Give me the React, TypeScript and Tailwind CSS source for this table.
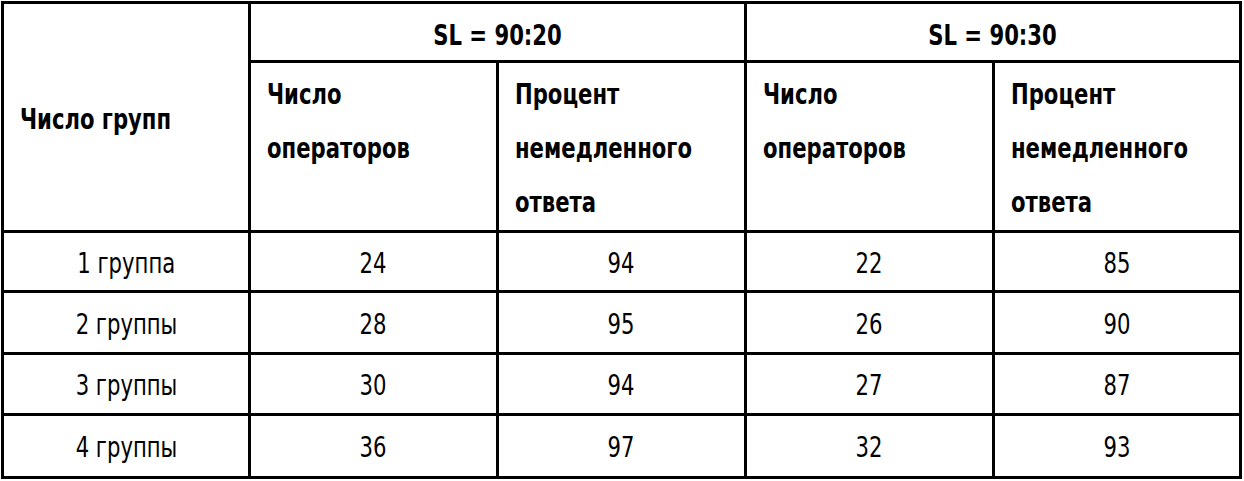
import React from "react";

const font = { fontFamily: '"Liberation Sans Narrow", "Arial Narrow", "DejaVu Sans Condensed", "Liberation Sans", sans-serif' };

const rows = [
  ["1 группа", "24", "94", "22", "85"],
  ["2 группы", "28", "95", "26", "90"],
  ["3 группы", "30", "94", "27", "87"],
  ["4 группы", "36", "97", "32", "93"],
];

const rowH = ["h-[57px]", "h-[59px]", "h-[58px]", "h-[60px]"];

function L({ children }: { children: React.ReactNode }) {
  return <span className="inline-block whitespace-nowrap scale-x-[0.84] origin-left">{children}</span>;
}
function C({ children }: { children: React.ReactNode }) {
  return <span className="inline-block whitespace-nowrap scale-x-[0.84] origin-center">{children}</span>;
}

export default function App() {
  return (
    <div className="w-[1244px] h-[481px] bg-white pl-px pt-px" style={font}>
      <div className="grid w-[1241px] grid-cols-[244px_245px_245px_245px_244px] gap-[3px] bg-black p-[3px] text-black">
        <div className="row-span-2 bg-white flex items-center pl-4 pt-[5px] text-[28px] font-bold leading-[54px]">
          <L>Число групп</L>
        </div>
        <div className="col-span-2 h-[56px] bg-white flex items-center justify-center text-[28px] font-bold pt-[8px]">
          <C>SL = 90:20</C>
        </div>
        <div className="col-span-2 h-[56px] bg-white flex items-center justify-center text-[28px] font-bold pt-[8px]">
          <C>SL = 90:30</C>
        </div>
        <div className="h-[167px] bg-white pl-4 pt-[5px] text-[28px] font-bold leading-[54px]">
          <L>Число</L><br /><L>операторов</L>
        </div>
        <div className="h-[167px] bg-white pl-4 pt-[5px] text-[28px] font-bold leading-[54px]">
          <L>Процент</L><br /><L>немедленного</L><br /><L>ответа</L>
        </div>
        <div className="h-[167px] bg-white pl-4 pt-[5px] text-[28px] font-bold leading-[54px]">
          <L>Число</L><br /><L>операторов</L>
        </div>
        <div className="h-[167px] bg-white pl-4 pt-[5px] text-[28px] font-bold leading-[54px]">
          <L>Процент</L><br /><L>немедленного</L><br /><L>ответа</L>
        </div>
        {rows.map((r, i) =>
          r.map((c, j) => (
            <div
              key={`${i}-${j}`}
              className={`${rowH[i]} bg-white flex items-center justify-center text-[28px] pt-[4px]`}
            >
              <C>{c}</C>
            </div>
          ))
        )}
      </div>
    </div>
  );
}
